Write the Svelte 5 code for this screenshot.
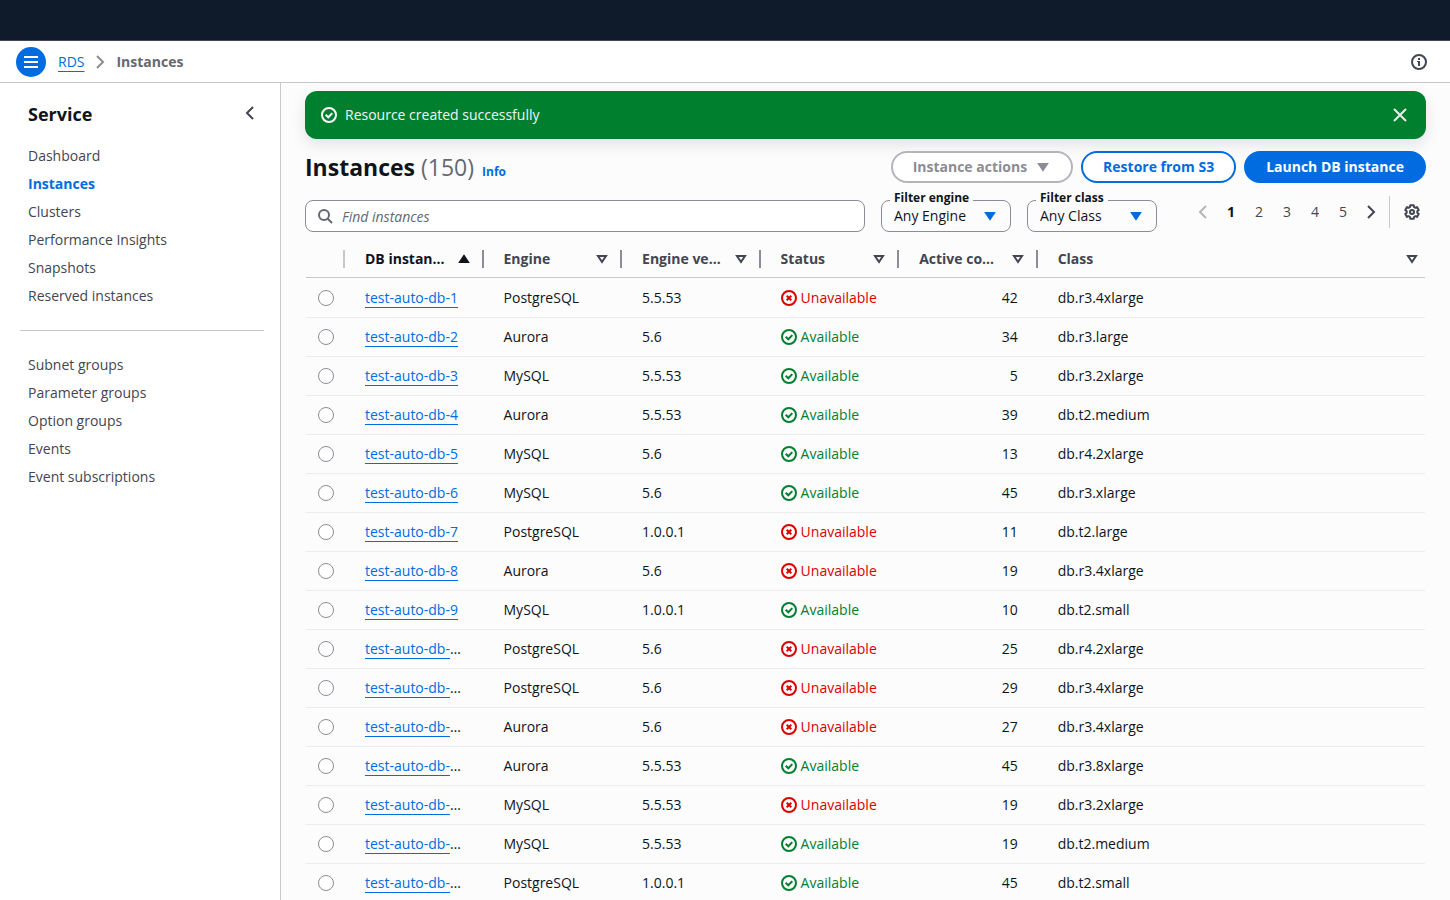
<script>
  const primaryNav = ['Dashboard', 'Instances', 'Clusters', 'Performance Insights', 'Snapshots', 'Reserved instances'];
  const secondaryNav = ['Subnet groups', 'Parameter groups', 'Option groups', 'Events', 'Event subscriptions'];
  const pages = [1, 2, 3, 4, 5];
  const columns = ['DB instance name', 'Engine', 'Engine version', 'Status', 'Active connections', 'Class'];

  const rows = [
    ['PostgreSQL', '5.5.53', false, 42, 'db.r3.4xlarge'],
    ['Aurora', '5.6', true, 34, 'db.r3.large'],
    ['MySQL', '5.5.53', true, 5, 'db.r3.2xlarge'],
    ['Aurora', '5.5.53', true, 39, 'db.t2.medium'],
    ['MySQL', '5.6', true, 13, 'db.r4.2xlarge'],
    ['MySQL', '5.6', true, 45, 'db.r3.xlarge'],
    ['PostgreSQL', '1.0.0.1', false, 11, 'db.t2.large'],
    ['Aurora', '5.6', false, 19, 'db.r3.4xlarge'],
    ['MySQL', '1.0.0.1', true, 10, 'db.t2.small'],
    ['PostgreSQL', '5.6', false, 25, 'db.r4.2xlarge'],
    ['PostgreSQL', '5.6', false, 29, 'db.r3.4xlarge'],
    ['Aurora', '5.6', false, 27, 'db.r3.4xlarge'],
    ['Aurora', '5.5.53', true, 45, 'db.r3.8xlarge'],
    ['MySQL', '5.5.53', false, 19, 'db.r3.2xlarge'],
    ['MySQL', '5.5.53', true, 19, 'db.t2.medium'],
    ['PostgreSQL', '1.0.0.1', true, 45, 'db.t2.small']
  ].map(([engine, version, available, connections, size], i) => ({
    name: `test-auto-db-${i + 1}`, engine, version, available, connections, size
  }));

  let selected = $state('');
  let page = $state(1);
  let active = $state('Instances');
</script>

{#snippet positive()}
  <svg class="icon" viewBox="0 0 16 16" aria-hidden="true"><circle cx="8" cy="8" r="7" /><path d="m4.700 7.700 2.600 2.600 4-4.200" /></svg>
{/snippet}
{#snippet negative()}
  <svg class="icon" viewBox="0 0 16 16" aria-hidden="true"><circle cx="8" cy="8" r="7" /><path d="m10.300 5.700-4.600 4.600M5.700 5.700l4.600 4.600" /></svg>
{/snippet}
{#snippet caret()}
  <svg class="icon solid" viewBox="0 0 16 16" aria-hidden="true"><path d="M4 5h8l-4 6z" /></svg>
{/snippet}
{#snippet angleLeft()}
  <svg class="icon" viewBox="0 0 16 16" aria-hidden="true"><path d="M11 2 5 8l6 6" /></svg>
{/snippet}
{#snippet angleRight()}
  <svg class="icon" viewBox="0 0 16 16" aria-hidden="true"><path d="m5 2 6 6-6 6" /></svg>
{/snippet}
{#snippet navList(items)}
  <ul>
    {#each items as item}
      <li><a href="#top" class:current={item === active} onclick={() => (active = item)}>{item}</a></li>
    {/each}
  </ul>
{/snippet}

<div class="shell">
  <header class="topbar"></header>

  <div class="crumbbar">
    <button class="menu" aria-label="Open navigation">
      <svg class="icon" viewBox="0 0 16 16" aria-hidden="true"><path d="M1 3h14M1 8h14M1 13h14" /></svg>
    </button>
    <nav class="crumbs" aria-label="Breadcrumbs">
      <a class="link" href="#top">RDS</a>
      {@render angleRight()}
      <strong>Instances</strong>
    </nav>
    <button class="plain" aria-label="Open help">
      <svg class="icon" viewBox="0 0 16 16" aria-hidden="true"><circle cx="8" cy="8" r="7" /><path class="glyph" d="M7 4h2v2H7zM6 7h3v5H7V8H6z" /></svg>
    </button>
  </div>

  <div class="body">
    <aside>
      <div class="aside-head">
        <h2>Service</h2>
        <button class="plain" aria-label="Close navigation">{@render angleLeft()}</button>
      </div>
      <nav aria-label="Service">
        {@render navList(primaryNav)}
        <hr />
        {@render navList(secondaryNav)}
      </nav>
    </aside>

    <main>
      <div class="flash" role="status">
        {@render positive()}
        <span>Resource created successfully</span>
        <button class="plain" aria-label="Dismiss">
          <svg class="icon" viewBox="0 0 16 16" aria-hidden="true"><path d="m2 2 12 12M14 2 2 14" /></svg>
        </button>
      </div>

      <div class="heading">
        <h1>Instances <span>(150)</span></h1>
        <a class="info" href="#top">Info</a>
        <div class="actions">
          <button class="btn" disabled>Instance actions {@render caret()}</button>
          <button class="btn">Restore from S3</button>
          <button class="btn primary">Launch DB instance</button>
        </div>
      </div>

      <div class="toolbar">
        <div class="search">
          <svg class="icon" viewBox="0 0 16 16" aria-hidden="true"><circle cx="7" cy="7" r="5" /><path d="m10.500 10.500 4.500 4.500" /></svg>
          <input type="text" placeholder="Find instances" aria-label="Find instances" />
        </div>
        <div class="filter">
          <label for="engine">Filter engine</label>
          <select id="engine"><option>Any Engine</option></select>
          {@render caret()}
        </div>
        <div class="filter">
          <label for="class">Filter class</label>
          <select id="class"><option>Any Class</option></select>
          {@render caret()}
        </div>
        <div class="pager">
          <button class="page" disabled aria-label="Previous page">{@render angleLeft()}</button>
          {#each pages as p}
            <button class="page" class:on={p === page} onclick={() => (page = p)}>{p}</button>
          {/each}
          <button class="page" aria-label="Next page">{@render angleRight()}</button>
        </div>
        <div class="prefs">
          <button class="plain" aria-label="Preferences">
            <svg class="icon" viewBox="0 0 16 16" aria-hidden="true">
              <path
                stroke-linejoin="round"
                d="M6.300 1.200h3.400L10 3l1.400.8 1.600-.7 1.700 3-1.400 1.100v1.600l1.400 1.100-1.700 3-1.600-.7L10 13l-.3 1.800H6.300L6 13l-1.400-.8-1.600.7-1.700-3 1.400-1.100V7.200L1.300 6.100l1.700-3 1.600.7L6 3z"
              />
              <circle cx="8" cy="8" r="2" />
            </svg>
          </button>
        </div>
      </div>

      <table>
        <colgroup>
          <col class="pick" />
          <col class="data" /><col class="data" /><col class="data" /><col class="data" /><col class="data" />
          <col />
        </colgroup>
        <thead>
          <tr>
            <th aria-label="Selection"></th>
            {#each columns as column, i}
              <th aria-sort={i === 0 ? 'ascending' : 'none'}>
                <button class="sort">
                  <span>{column}</span>
                  {#if i === 0}
                    <svg class="icon solid" viewBox="0 0 16 16" aria-hidden="true"><path d="M4 11h8L8 5z" /></svg>
                  {:else}
                    <svg class="icon" viewBox="0 0 16 16" aria-hidden="true"><path d="M4 5h8l-4 6z" /></svg>
                  {/if}
                </button>
              </th>
            {/each}
          </tr>
        </thead>
        <tbody>
          {#each rows as row}
            <tr>
              <td><input type="radio" name="instance" value={row.name} bind:group={selected} aria-label={row.name} /></td>
              <td><a class="link" href="#top">{row.name}</a></td>
              <td>{row.engine}</td>
              <td>{row.version}</td>
              <td>
                <span class="status" class:bad={!row.available}>
                  {#if row.available}{@render positive()}Available{:else}{@render negative()}Unavailable{/if}
                </span>
              </td>
              <td class="num">{row.connections}</td>
              <td>{row.size}</td>
            </tr>
          {/each}
        </tbody>
      </table>
    </main>
  </div>
</div>

<style>
  :global(body) {
    margin: 0;
    background: #fcfcfd;
  }
  .shell {
    display: flex;
    flex-direction: column;
    height: 100vh;
    font: 14px/20px 'Open Sans', sans-serif;
    color: #0f141a;
  }
  .shell * {
    box-sizing: border-box;
  }
  button,
  input,
  select {
    font: inherit;
    color: inherit;
    margin: 0;
  }
  button {
    cursor: pointer;
  }
  h1,
  h2,
  ul {
    margin: 0;
    padding: 0;
  }
  .icon {
    display: block;
    flex: none;
    width: 16px;
    height: 16px;
    fill: none;
    stroke: currentColor;
    stroke-width: 2;
  }
  .solid {
    fill: currentColor;
  }
  .glyph {
    fill: currentColor;
    stroke: none;
  }
  .plain {
    display: flex;
    padding: 0;
    border: 0;
    background: none;
    color: #424650;
  }
  .link {
    color: #006ce0;
    text-decoration: underline 1px;
    text-underline-offset: 4px;
  }

  .topbar {
    flex: none;
    height: 41px;
    background: #0f1b2a;
    border-bottom: 1px solid #424650;
  }
  .crumbbar {
    display: flex;
    flex: none;
    align-items: center;
    gap: 12px;
    height: 42px;
    padding: 0 23px 0 16px;
    background: #fff;
    border-bottom: 1px solid #c6c6cd;
  }
  .menu {
    display: flex;
    align-items: center;
    justify-content: center;
    width: 30px;
    height: 30px;
    padding: 0;
    border: 0;
    border-radius: 50%;
    background: #006ce0;
    color: #fff;
  }
  .crumbs {
    display: flex;
    flex: 1;
    align-items: center;
    gap: 8px;
  }
  .crumbs .icon {
    color: #8c8c94;
  }
  .crumbs strong {
    color: #656871;
  }

  .body {
    display: flex;
    flex: 1;
    min-height: 0;
  }
  aside {
    flex: none;
    width: 281px;
    padding: 20px 16px 0 20px;
    background: #fff;
    border-right: 1px solid #c6c6cd;
  }
  .aside-head {
    display: flex;
    justify-content: space-between;
    padding: 0 6px 0 8px;
    margin-bottom: 17px;
  }
  .aside-head .plain {
    margin-top: 2px;
    align-self: flex-start;
  }
  h2 {
    font-size: 18px;
    line-height: 22px;
  }
  aside li {
    list-style: none;
    padding: 4px 8px;
  }
  aside li a {
    color: #424650;
    text-decoration: none;
  }
  aside li a.current {
    color: #006ce0;
    font-weight: 700;
  }
  hr {
    height: 1px;
    margin: 20px 0;
    border: 0;
    background: #c6c6cd;
  }

  main {
    flex: 1;
    min-width: 0;
    padding: 8px 24px 0;
    overflow-y: auto;
    scrollbar-width: none;
  }
  .flash {
    display: flex;
    align-items: center;
    gap: 8px;
    height: 48px;
    padding: 0 18px 0 16px;
    border-radius: 12px;
    background: #00802f;
    color: #fff;
    box-shadow: 0 6px 16px rgba(0, 7, 22, 0.1);
  }
  .flash span {
    flex: 1;
    color: #f3f3f7;
  }
  .flash .plain {
    color: #ebebf0;
  }
  .heading {
    display: flex;
    align-items: center;
    margin: 12px 0 13px;
  }
  h1 {
    font-size: 23px;
    line-height: 30px;
  }
  h1 span {
    font-weight: 400;
    color: #656871;
  }
  .info {
    margin: 10px 0 0 8px;
    font-size: 12px;
    line-height: 16px;
    font-weight: 700;
    color: #006ce0;
    text-decoration: none;
  }
  .actions {
    display: flex;
    gap: 8px;
    margin-left: auto;
  }
  .btn {
    display: flex;
    align-items: center;
    gap: 8px;
    height: 32px;
    padding: 0 20px;
    border: 2px solid #006ce0;
    border-radius: 16px;
    background: #fff;
    color: #006ce0;
    font-weight: 700;
  }
  .btn:disabled {
    border-color: #b4b4bb;
    color: #8c8c94;
  }
  .primary {
    background: #006ce0;
    color: #fff;
  }

  .toolbar {
    display: flex;
    align-items: flex-start;
  }
  .search {
    display: flex;
    flex: 0 1 560px;
    align-items: center;
    gap: 9px;
    height: 32px;
    margin-top: 4px;
    padding: 0 11px;
    border: 1px solid #8c8c94;
    border-radius: 8px;
    background: #fff;
    color: #656871;
  }
  .search input {
    flex: 1;
    min-width: 0;
    padding: 2px 0 0;
    border: 0;
    outline: 0;
    background: none;
  }
  .search input::placeholder {
    color: #656871;
    font-style: italic;
    opacity: 1;
  }
  .filter {
    position: relative;
    flex: none;
    width: 130px;
    margin: 4px 0 0 16px;
  }
  .filter label {
    position: absolute;
    top: -10px;
    left: 9px;
    padding: 0 4px;
    background: #fcfcfd;
    font-size: 12px;
    line-height: 16px;
    font-weight: 700;
  }
  .filter select {
    display: block;
    width: 100%;
    height: 32px;
    padding: 0 32px 0 12px;
    border: 1px solid #8c8c94;
    border-radius: 8px;
    background: none;
    appearance: none;
  }
  .filter .icon {
    position: absolute;
    top: 8px;
    right: 13px;
    color: #006ce0;
    pointer-events: none;
  }
  .pager {
    display: flex;
    align-items: center;
    height: 32px;
    margin-left: auto;
    padding-right: 4px;
  }
  .page {
    display: flex;
    justify-content: center;
    width: 28px;
    padding: 0;
    border: 0;
    background: none;
    color: #424650;
  }
  .page:disabled {
    color: #b4b4bb;
  }
  .page.on {
    color: #0f141a;
    font-weight: 700;
  }
  .prefs {
    display: flex;
    align-items: center;
    height: 32px;
    padding: 0 6px 0 14px;
    border-left: 1px solid #c6c6cd;
  }

  table {
    width: calc(100% - 2px);
    margin: 8px 1px 0;
    table-layout: fixed;
    border-collapse: separate;
    border-spacing: 0;
  }
  .pick {
    width: 39px;
  }
  .data {
    width: 12.38%;
  }
  th {
    position: relative;
    height: 38px;
    padding: 0 12px 0 20px;
    border-bottom: 1px solid #c6c6cd;
    color: #424650;
    text-align: left;
  }
  th:not(:last-child)::after {
    content: '';
    position: absolute;
    top: 10px;
    right: 0;
    width: 2px;
    height: 18px;
    background: #8c8c94;
  }
  th:first-child::after {
    background: #c6c6cd;
  }
  th:last-child {
    padding-right: 5px;
  }
  .sort {
    display: flex;
    align-items: center;
    gap: 10px;
    width: 100%;
    padding: 0;
    border: 0;
    background: none;
    font-weight: 700;
    text-align: left;
  }
  .sort span {
    flex: 1;
    min-width: 0;
  }
  th[aria-sort='ascending'] {
    color: #0f141a;
  }
  td,
  .sort span {
    overflow: hidden;
    text-overflow: ellipsis;
    white-space: nowrap;
  }
  td {
    padding: 9px 20px;
    border-bottom: 1px solid #ebebf0;
  }
  tbody tr:first-child td {
    padding-top: 10px;
  }
  td:first-child {
    padding-left: 12px;
    padding-right: 0;
  }
  td input {
    display: block;
    width: 16px;
    height: 16px;
    border: 1px solid #8c8c94;
    border-radius: 50%;
    background: #fff;
    appearance: none;
  }
  td input:checked {
    border: 5px solid #006ce0;
  }
  .num {
    text-align: right;
  }
  .status {
    display: flex;
    align-items: center;
    gap: 4px;
    color: #00802f;
  }
  .bad {
    color: #db0000;
  }
</style>
